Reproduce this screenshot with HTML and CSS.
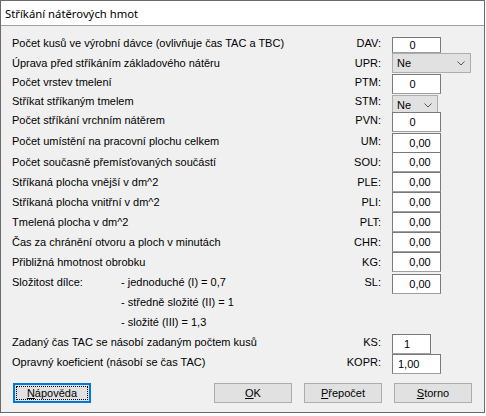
FILE: index.html
```html
<!DOCTYPE html>
<html lang="cs">

<head>
    <meta charset="UTF-8">
    <meta name="viewport" content="width=device-width, initial-scale=1.0">
    <title>Stříkání nátěrových hmot</title>
    <link rel="stylesheet" href="styles.css">
</head>

<body>
    <div class="window">
        <div class="titlebar">Stříkání nátěrových hmot</div>

        <div class="content">
            <div class="form">
                <div class="row h20">
                    <span class="lbl">Počet kusů ve výrobní dávce (ovlivňuje čas TAC a TBC)</span>
                    <span class="code">DAV:</span>
                    <input class="box small zero drop2" type="text" value="0">
                </div>
                <div class="row h19">
                    <span class="lbl">Úprava před stříkáním základového nátěru</span>
                    <span class="code">UPR:</span>
                    <div class="combo wide">
                        <span>Ne</span>
                        <svg width="8" height="5" viewBox="0 0 8 5"><polyline points="0.5,0.5 4,4 7.5,0.5" fill="none" stroke="#555" stroke-width="1"/></svg>
                    </div>
                </div>
                <div class="row h19">
                    <span class="lbl">Počet vrstev tmelení</span>
                    <span class="code">PTM:</span>
                    <input class="box zero drop2" type="text" value="0">
                </div>
                <div class="row h19">
                    <span class="lbl">Stříkat stříkaným tmelem</span>
                    <span class="code">STM:</span>
                    <div class="combo narrow drop4">
                        <span>Ne</span>
                        <svg width="8" height="5" viewBox="0 0 8 5"><polyline points="0.5,0.5 4,4 7.5,0.5" fill="none" stroke="#555" stroke-width="1"/></svg>
                    </div>
                </div>
                <div class="row h20">
                    <span class="lbl">Počet stříkání vrchním nátěrem</span>
                    <span class="code">PVN:</span>
                    <input class="box zero drop2" type="text" value="0">
                </div>
                <div class="row h22">
                    <span class="lbl">Počet umístění na pracovní plochu celkem</span>
                    <span class="code">UM:</span>
                    <input class="box dec drop2" type="text" value="0,00">
                </div>
                <div class="row h20">
                    <span class="lbl">Počet současně přemísťovaných součástí</span>
                    <span class="code">SOU:</span>
                    <input class="box dec" type="text" value="0,00">
                </div>
                <div class="row h20">
                    <span class="lbl">Stříkaná plocha vnější v dm^2</span>
                    <span class="code">PLE:</span>
                    <input class="box dec" type="text" value="0,00">
                </div>
                <div class="row h20">
                    <span class="lbl">Stříkaná plocha vnitřní v dm^2</span>
                    <span class="code">PLI:</span>
                    <input class="box dec" type="text" value="0,00">
                </div>
                <div class="row h20">
                    <span class="lbl">Tmelená plocha v dm^2</span>
                    <span class="code">PLT:</span>
                    <input class="box dec" type="text" value="0,00">
                </div>
                <div class="row h20">
                    <span class="lbl">Čas za chránění otvoru a ploch v minutách</span>
                    <span class="code">CHR:</span>
                    <input class="box dec" type="text" value="0,00">
                </div>
                <div class="row h20">
                    <span class="lbl">Přibližná hmotnost obrobku</span>
                    <span class="code">KG:</span>
                    <input class="box dec" type="text" value="0,00">
                </div>
                <div class="row h20">
                    <span class="lbl split"><span class="head">Složitost dílce:</span><span>- jednoduché (I) = 0,7</span></span>
                    <span class="code">SL:</span>
                    <input class="box dec drop2" type="text" value="0,00">
                </div>
                <div class="row h20">
                    <span class="lbl sub">- středně složité (II) = 1</span>
                </div>
                <div class="row h20">
                    <span class="lbl sub">- složité (III) = 1,3</span>
                </div>
                <div class="row h20">
                    <span class="lbl">Zadaný čas TAC se násobí zadaným počtem kusů</span>
                    <span class="code">KS:</span>
                    <input class="box short drop2" type="text" value="1">
                </div>
                <div class="row h20">
                    <span class="lbl">Opravný koeficient (násobí se čas TAC)</span>
                    <span class="code">KOPR:</span>
                    <input class="box left drop2" type="text" value="1,00">
                </div>
            </div>

            <div class="buttons">
                <button class="btn focused"><span class="focus-ring"><u>N</u>ápověda</span></button>
                <button class="btn"><u>O</u>K</button>
                <button class="btn"><u>P</u>řepočet</button>
                <button class="btn"><u>S</u>torno</button>
            </div>
        </div>
    </div>
</body>

</html>
```

FILE: styles.css
```css
body {
    margin: 0;
    background: #fff;
    font-family: "Liberation Sans", Arial, sans-serif;
    font-size: 11px;
    color: #000;
}

.window {
    width: 485px;
    height: 413px;
    box-sizing: border-box;
    border: 1px solid #6b6b6b;
    background: #f0f0f0;
}

.titlebar {
    height: 24px;
    background: #fff;
    border-bottom: 1px solid #a0a0a0;
    display: flex;
    align-items: center;
    padding-left: 4px;
    font-family: "Noto Sans", "Open Sans", sans-serif;
    font-size: 11.3px;
}

.content {
    padding: 7px 12px 0 11px;
}

/* form rows */
.row {
    display: grid;
    grid-template-columns: 309px 71px auto;
    grid-template-rows: 100%;
    align-items: center;
}

.h19 { height: 19px; }
.h20 { height: 20px; }
.h22 { height: 22px; }

.lbl {
    white-space: nowrap;
}

.split {
    display: flex;
}

.split .head {
    width: 109px;
}

.sub {
    padding-left: 109px;
}

.code {
    text-align: right;
    padding-right: 11px;
}

/* some controls sit a little lower than their label */
.drop2 { margin-top: 4px; }
.drop4 { margin-top: 8px; }

/* text boxes */
.box {
    width: 49px;
    height: 20px;
    box-sizing: border-box;
    margin: 0;
    padding: 0;
    border: 1px solid #7a7a7a;
    border-bottom-color: #a0a0a0;
    background: #fff;
    font-family: "Liberation Sans", Arial, sans-serif;
    font-size: 11px;
    color: #000;
    text-align: center;
}

.box.drop2 { margin-top: 4px; }

.small { height: 16px; }
.zero { padding-right: 8px; }
.dec { padding-left: 7px; }

.short {
    width: 39px;
    text-align: left;
    padding-left: 11px;
}

.left {
    text-align: left;
    padding-left: 5px;
}

/* dropdowns */
.combo {
    height: 20px;
    box-sizing: border-box;
    border: 1px solid #adadad;
    background: #e1e1e1;
    display: flex;
    align-items: center;
    justify-content: space-between;
    padding: 1px 5px 0 4px;
}

.wide { width: 79px; }
.narrow { width: 46px; }

/* bottom buttons */
.buttons {
    display: flex;
    gap: 12px;
    margin-top: 11px;
    padding-left: 1px;
}

.btn {
    width: 78px;
    height: 20px;
    box-sizing: border-box;
    margin: 0;
    padding: 0;
    border: 1px solid #adadad;
    background: #e1e1e1;
    font-family: "Liberation Sans", Arial, sans-serif;
    font-size: 11px;
    color: #000;
}

.btn.focused {
    border: 2px solid #0078d7;
    margin-right: auto;
    padding: 1px;
}

.focus-ring {
    display: flex;
    align-items: center;
    justify-content: center;
    height: 100%;
    border: 1px dotted #000;
    box-sizing: border-box;
}
```
